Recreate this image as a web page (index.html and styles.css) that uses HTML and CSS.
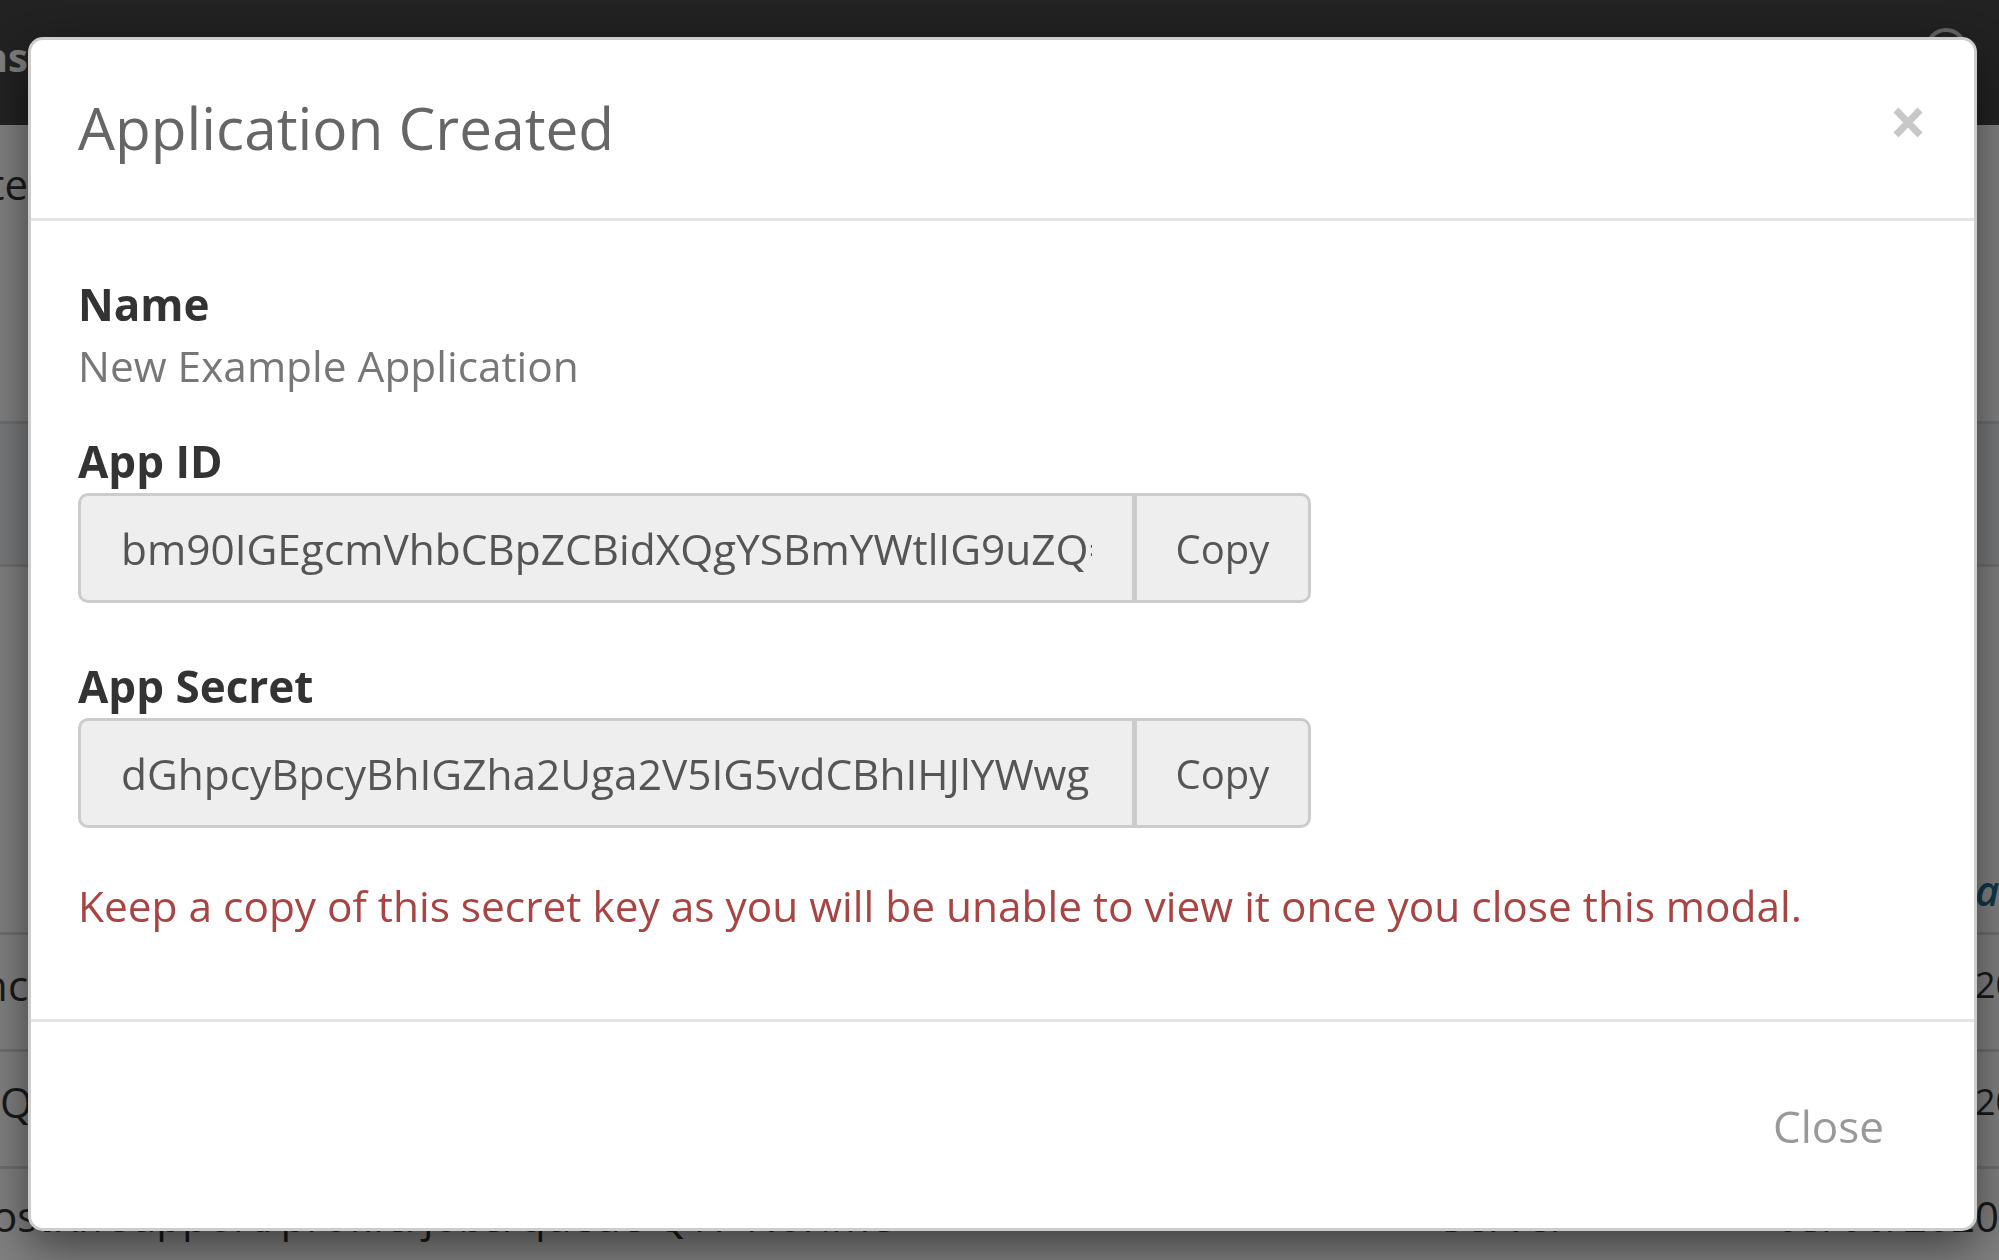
FILE: index.html
```html
<!DOCTYPE html>
<html lang="en">
<head>
  <meta charset="UTF-8">
  <meta name="viewport" content="width=device-width, initial-scale=1.0">
  <title>Applications</title>
  <link rel="stylesheet" href="styles.css">
</head>
<body>
  <!-- page behind the dialog -->
  <div class="page">
    <header class="navbar">
      <div class="brand"><span>Applications</span></div>
      <div class="avatar"></div>
    </header>
    <main class="content">
      <div class="toolbar">
        <div class="cell-left"><span>Create</span></div>
      </div>
      <div class="row head"></div>
      <div class="row tall">
        <div class="cell-left"></div>
        <div class="cell-right link"><span>at</span></div>
      </div>
      <div class="row">
        <div class="cell-left"><span>Web Sync</span></div>
        <div class="cell-right"><span>2020</span></div>
      </div>
      <div class="row">
        <div class="cell-left start"><span>QA Tools</span></div>
        <div class="cell-right"><span>2020</span></div>
      </div>
      <div class="row last">
        <span class="cell-path">ostKr/support/profile/jobs/queue QT7 Nor.me</span>
        <span class="cell-type">Server</span>
        <span class="cell-date">03/06/2020</span>
      </div>
    </main>
  </div>
  <div class="backdrop"></div>

  <!-- Application Created dialog -->
  <div class="modal" role="dialog">
    <div class="modal-header">
      <h4 class="modal-title">Application Created</h4>
      <button class="close" aria-label="Close">
        <svg width="30" height="31" viewBox="0 0 30 31">
          <path d="M3 3 L27 28 M27 3 L3 28" stroke="#c8c8c8" stroke-width="7" fill="none"/>
        </svg>
      </button>
    </div>
    <div class="modal-body">
      <div class="field-label">Name</div>
      <div class="field-value">New Example Application</div>

      <div class="field-label spaced">App ID</div>
      <div class="input-group">
        <input class="form-control" type="text" readonly value="bm90IGEgcmVhbCBpZCBidXQgYSBmYWtlIG9uZQ==">
        <button class="btn-copy">Copy</button>
      </div>

      <div class="field-label gap">App Secret</div>
      <div class="input-group">
        <input class="form-control" type="text" readonly value="dGhpcyBpcyBhIGZha2Uga2V5IG5vdCBhIHJlYWwgb25l">
        <button class="btn-copy">Copy</button>
      </div>

      <p class="text-danger">Keep a copy of this secret key as you will be unable to view it once you close this modal.</p>
    </div>
    <div class="modal-footer">
      <button class="btn-link">Close</button>
    </div>
  </div>
</body>
</html>
```

FILE: styles.css
```css
/* Reset */
* {
  margin: 0;
  padding: 0;
  box-sizing: border-box;
}

html, body {
  height: 100%;
}

body {
  font-family: "Open Sans", "Liberation Sans", sans-serif;
  background: #fff;
  color: #333;
  overflow: hidden;
}

/* ---------- page underneath ---------- */
.navbar {
  height: 125px;
  background: #444;
  display: flex;
  justify-content: space-between;
  align-items: flex-start;
}

.brand {
  width: 28px;
  margin-top: 32px;
  overflow: hidden;
  display: flex;
  justify-content: flex-end;
  white-space: nowrap;
  font-size: 40px;
  line-height: 50px;
  font-weight: 700;
  color: #fff;
}

.avatar {
  width: 42px;
  height: 42px;
  margin-top: 28px;
  margin-right: 32px;
  border: 4px solid #ccc;
  border-radius: 50%;
}

.content {
  font-size: 42px;
  line-height: 60px;
}

.toolbar {
  height: 296px;
  padding-top: 29px;
}

.row {
  height: 117px;
  padding-top: 20px;
  display: flex;
  justify-content: space-between;
  align-items: flex-start;
  border-bottom: 3px solid #ddd;
}

.row.head {
  height: 146px;
  background: #eef1f4;
  border-top: 3px solid #ddd;
}

.row.tall {
  height: 368px;
  padding-top: 293px;
}

.row.last {
  border-bottom: 0;
  justify-content: flex-start;
  padding-top: 17px;
}

.cell-left {
  width: 28px;
  overflow: hidden;
  display: flex;
  justify-content: flex-end;
  white-space: nowrap;
}

.cell-left.start {
  justify-content: flex-start;
}

.cell-right {
  width: 24px;
  overflow: hidden;
  white-space: nowrap;
  font-size: 36px;
}

.cell-right.link {
  color: #1d6f8f;
  font-style: italic;
  font-weight: 600;
  font-size: 42px;
}

.cell-path {
  margin-left: -8px;
  width: 1494px;
  white-space: nowrap;
}

.cell-type {
  width: 345px;
}

.cell-date {
  white-space: nowrap;
}

.backdrop {
  position: fixed;
  inset: 0;
  background: rgba(0, 0, 0, 0.5);
}

/* ---------- dialog ---------- */
.modal {
  position: fixed;
  top: 37px;
  left: 28px;
  width: 1949px;
  background: #fff;
  border: 3px solid rgba(0, 0, 0, 0.2);
  border-radius: 15px;
  box-shadow: 0 15px 45px rgba(0, 0, 0, 0.5);
}

.modal-header {
  display: flex;
  justify-content: space-between;
  align-items: flex-start;
  padding: 46px 48px 50px 47px;
  border-bottom: 3px solid #e5e5e5;
}

.modal-title {
  font-size: 58.5px;
  line-height: 82px;
  font-weight: 400;
  color: #666;
}

.close {
  margin-top: 21px;
  margin-right: 3px;
  background: none;
  border: 0;
  line-height: 0;
  cursor: pointer;
}

.modal-body {
  padding: 53px 48px 48px 47px;
}

.field-label {
  font-size: 44px;
  line-height: 60px;
  font-weight: 700;
  color: #333;
}

.field-label.spaced {
  margin-top: 35px;
}

.field-label.gap {
  margin-top: 53px;
}

.field-value {
  font-size: 42.4px;
  line-height: 60px;
  margin-top: 2px;
  color: #777;
}

.input-group {
  display: flex;
  height: 110px;
  width: 1233px;
  margin-top: 2px;
}

.form-control {
  flex: 1;
  min-width: 0;
  height: 110px;
  padding: 0 40px;
  font-family: inherit;
  font-size: 42.4px;
  color: #555;
  background: #eee;
  border: 3px solid #ccc;
  border-right: 0;
  border-radius: 10px 0 0 10px;
  outline: none;
}

.btn-copy {
  width: 179px;
  height: 110px;
  font-family: inherit;
  font-size: 40px;
  color: #555;
  background: #eee;
  border: 3px solid #ccc;
  border-left-width: 5px;
  border-radius: 0 10px 10px 0;
  cursor: pointer;
}

.text-danger {
  margin-top: 48px;
  margin-bottom: 35px;
  font-size: 42.4px;
  line-height: 60px;
  color: #a94442;
}

.modal-footer {
  display: flex;
  justify-content: flex-end;
  padding: 48px 48px 46px;
  border-top: 3px solid #e5e5e5;
}

.btn-link {
  padding: 24px 42px;
  font-family: inherit;
  font-size: 44px;
  line-height: 64px;
  color: #999;
  background: none;
  border: 0;
  cursor: pointer;
}
```
